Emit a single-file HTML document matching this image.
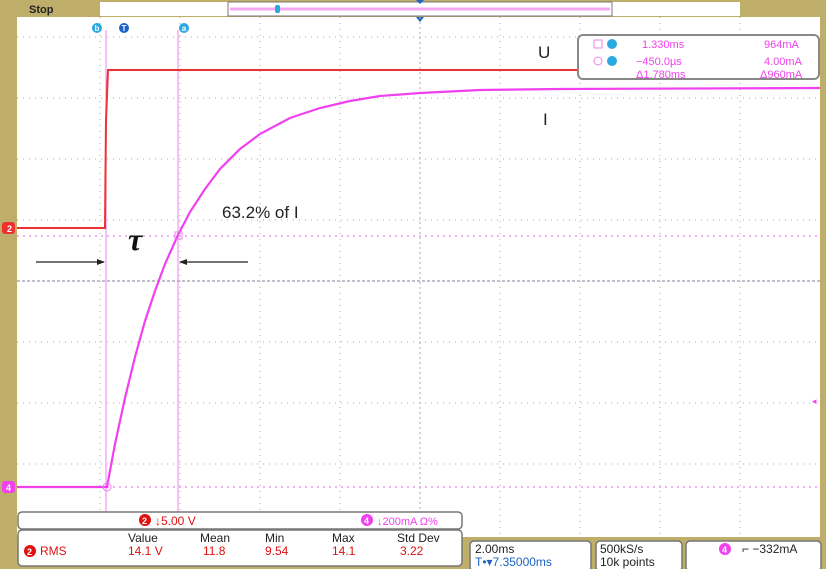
<!DOCTYPE html>
<html><head><meta charset="utf-8"><style>
html,body{margin:0;padding:0;background:#bfae6a;}
svg{display:block;font-family:"Liberation Sans",sans-serif;}
</style></head><body>
<svg width="826" height="569" viewBox="0 0 826 569" xmlns="http://www.w3.org/2000/svg">
<rect x="0" y="0" width="826" height="569" fill="#bfae6a"/>
<rect x="17" y="17" width="803" height="520" fill="#fff"/>
<rect x="100" y="2" width="640" height="14" fill="#fff"/>
<rect x="228" y="2" width="384" height="14" fill="#fff" stroke="#777" stroke-width="1"/>
<line x1="230" y1="9" x2="610" y2="9" stroke="#f4a8f4" stroke-width="3"/>
<text x="29" y="13" font-size="11" font-weight="bold" fill="#222">Stop</text>
<rect x="275" y="5" width="5" height="8" rx="2" fill="#2aa8e0"/>
<path d="M416 17 L424 17 L420 22 Z" fill="#1d62c8"/>
<path d="M416 0 L424 0 L420 4 Z" fill="#1d62c8"/>
<g stroke="#aaa" stroke-width="1" stroke-dasharray="1,5">
<line x1="100" y1="17" x2="100" y2="537"/><line x1="180" y1="17" x2="180" y2="537"/>
<line x1="260" y1="17" x2="260" y2="537"/><line x1="340" y1="17" x2="340" y2="537"/>
<line x1="500" y1="17" x2="500" y2="537"/><line x1="580" y1="17" x2="580" y2="537"/>
<line x1="660" y1="17" x2="660" y2="537"/><line x1="740" y1="17" x2="740" y2="537"/>
<line x1="17" y1="37" x2="820" y2="37"/><line x1="17" y1="98" x2="820" y2="98"/>
<line x1="17" y1="159" x2="820" y2="159"/><line x1="17" y1="220" x2="820" y2="220"/>
<line x1="17" y1="342" x2="820" y2="342"/><line x1="17" y1="403" x2="820" y2="403"/>
<line x1="17" y1="464" x2="820" y2="464"/>
</g>
<line x1="420" y1="17" x2="420" y2="537" stroke="#aab" stroke-width="1" stroke-dasharray="2,3"/>
<line x1="17" y1="281" x2="820" y2="281" stroke="#aab" stroke-width="1.5" stroke-dasharray="3,2"/>
<line x1="106" y1="30" x2="106" y2="512" stroke="#f080f0" stroke-width="1"/>
<line x1="178" y1="30" x2="178" y2="512" stroke="#f080f0" stroke-width="1"/>
<line x1="17" y1="236" x2="820" y2="236" stroke="#f080f0" stroke-width="1.2" stroke-dasharray="2,4"/>
<line x1="17" y1="487" x2="820" y2="487" stroke="#f080f0" stroke-width="1.2" stroke-dasharray="2,4"/>
<circle cx="97" cy="28" r="5" fill="#2aa8e0"/><text x="97" y="31" font-size="8" fill="#fff" text-anchor="middle" font-weight="bold">b</text>
<circle cx="124" cy="28" r="5" fill="#1d62c8"/><text x="124" y="31" font-size="8" fill="#fff" text-anchor="middle" font-weight="bold">T</text>
<circle cx="184" cy="28" r="5" fill="#2aa8e0"/><text x="184" y="31" font-size="8" fill="#fff" text-anchor="middle" font-weight="bold">a</text>
<path d="M17 228 L105 228 L106 120 L108 70 L820 70" fill="none" stroke="#f03030" stroke-width="2"/>
<path fill="none" stroke="#f040f0" stroke-width="2.2" d="M17 487 L107 487 L115 444 L125 398 L135 357 L145 321 L155 291 L165 264 L178 235 L190 212 L205 189 L220 169 L240 149 L260 134 L290 118 L320 108 L350 101 L380 96 L420 93 L480 90 L560 89 L820 88"/>
<rect x="175" y="232" width="7" height="7" fill="none" stroke="#f080f0" stroke-width="1"/>
<circle cx="107" cy="487" r="4" fill="none" stroke="#f080f0" stroke-width="1"/>
<line x1="36" y1="262" x2="104" y2="262" stroke="#222" stroke-width="1.2"/>
<path d="M105 262 L97 259 L97 265 Z" fill="#222"/>
<line x1="180" y1="262" x2="248" y2="262" stroke="#222" stroke-width="1.2"/>
<path d="M179 262 L187 259 L187 265 Z" fill="#222"/>
<text x="128" y="250" font-family="Liberation Serif,serif" font-style="italic" font-weight="bold" font-size="32" fill="#111">τ</text>
<text x="222" y="218" font-size="17" fill="#222">63.2% of I</text>
<text x="538" y="58" font-size="17" fill="#222">U</text>
<text x="543" y="125" font-size="17" fill="#222">I</text>
<rect x="2" y="222" width="13" height="12" rx="3" fill="#f03030"/><text x="7" y="232" font-size="9" fill="#fff" font-weight="bold">2</text>
<rect x="2" y="481" width="13" height="12" rx="3" fill="#f040f0"/><text x="6" y="491" font-size="9" fill="#fff" font-weight="bold">4</text>
<text x="812" y="404" font-size="9" fill="#f040f0">◂</text>
<rect x="578" y="35" width="241" height="44" rx="5" fill="#fff" stroke="#888" stroke-width="2"/>
<g font-size="11" fill="#f040f0">
<rect x="594" y="40" width="8" height="8" fill="none" stroke="#f080f0"/>
<circle cx="598" cy="61" r="4" fill="none" stroke="#f080f0"/>
<circle cx="612" cy="44" r="5" fill="#2aa8e0"/><circle cx="612" cy="61" r="5" fill="#2aa8e0"/>
<text x="642" y="48">1.330ms</text><text x="764" y="48">964mA</text>
<text x="636" y="65">−450.0µs</text><text x="764" y="65">4.00mA</text>
<text x="636" y="78">Δ1.780ms</text><text x="760" y="78">Δ960mA</text>
</g>
<rect x="18" y="512" width="444" height="17" rx="4" fill="#fff" stroke="#777" stroke-width="1.5"/>
<circle cx="145" cy="520" r="6" fill="#e01010"/><text x="142" y="524" font-size="9" fill="#fff" font-weight="bold">2</text>
<text x="155" y="525" font-size="12" fill="#e01010">↓5.00 V</text>
<circle cx="367" cy="520" r="6" fill="#f040f0"/><text x="364" y="524" font-size="9" fill="#fff" font-weight="bold">4</text>
<text x="377" y="525" font-size="11" fill="#f040f0">↓200mA Ω%</text>
<rect x="18" y="530" width="444" height="36" rx="4" fill="#fff" stroke="#777" stroke-width="1.5"/>
<g font-size="12" fill="#222"><text x="128" y="542">Value</text><text x="200" y="542">Mean</text><text x="265" y="542">Min</text><text x="332" y="542">Max</text><text x="397" y="542">Std Dev</text></g>
<circle cx="30" cy="551" r="6" fill="#e01010"/><text x="27" y="555" font-size="9" fill="#fff" font-weight="bold">2</text>
<g font-size="12" fill="#e01010"><text x="40" y="555">RMS</text><text x="128" y="555">14.1 V</text><text x="203" y="555">11.8</text><text x="265" y="555">9.54</text><text x="332" y="555">14.1</text><text x="400" y="555">3.22</text></g>
<rect x="470" y="541" width="121" height="30" rx="4" fill="#fff" stroke="#777" stroke-width="1.5"/>
<text x="475" y="553" font-size="12" fill="#222">2.00ms</text>
<text x="475" y="566" font-size="12" fill="#1d62c8">T•▾7.35000ms</text>
<rect x="596" y="541" width="86" height="30" rx="4" fill="#fff" stroke="#777" stroke-width="1.5"/>
<text x="600" y="553" font-size="12" fill="#222">500kS/s</text>
<text x="600" y="566" font-size="12" fill="#222">10k points</text>
<rect x="686" y="541" width="135" height="30" rx="4" fill="#fff" stroke="#777" stroke-width="1.5"/>
<circle cx="725" cy="549" r="6" fill="#f040f0"/><text x="722" y="553" font-size="9" fill="#fff" font-weight="bold">4</text>
<text x="742" y="553" font-size="12" fill="#222">⌐ −332mA</text>
</svg>
</body></html>
